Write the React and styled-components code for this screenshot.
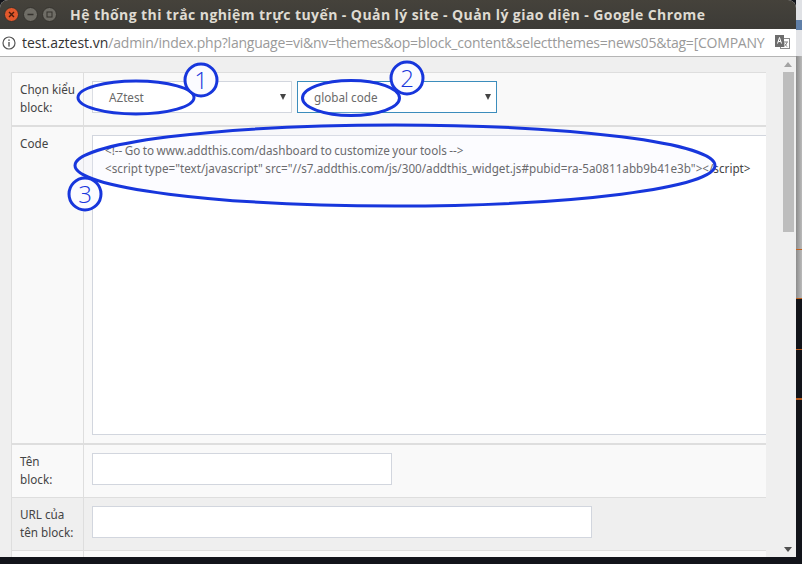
import React from 'react'
import styled, { createGlobalStyle } from 'styled-components'

const Global = createGlobalStyle`
  html, body {
    margin: 0;
    padding: 0;
    width: 802px;
    height: 564px;
    overflow: hidden;
    background: #12141a;
  }
  * {
    box-sizing: border-box;
  }
`

const Desktop = styled.div`
  position: relative;
  display: flex;
  width: 802px;
  height: 564px;
  background: #12141a;
  overflow: hidden;
`

const Backdrop = styled.div`
  width: 6px;
  height: 564px;
  flex: none;
  display: flex;
  flex-direction: column;
`

const BackdropBand = styled.div`
  height: ${(p) => p.$h}px;
  flex: none;
  background: ${(p) => p.$bg};
`

const Window = styled.div`
  width: 796px;
  height: 557px;
  flex: none;
  display: flex;
  flex-direction: column;
  overflow: hidden;
  border-radius: 8px 8px 0 0;
  background: #efefef;
`

const TitleBar = styled.div`
  height: 29px;
  flex: none;
  display: flex;
  align-items: center;
  padding-left: 4px;
  background: linear-gradient(#45423b, #3c3b37);
`

const WinBtn = styled.span`
  width: 15px;
  height: 15px;
  margin-right: 4px;
  flex: none;
  border-radius: 50%;
  display: flex;
  align-items: center;
  justify-content: center;
  background: ${(p) => p.$bg};
  border: 1px solid #35332e;
`

const Title = styled.div`
  margin-left: 9px;
  font-family: 'Open Sans', sans-serif;
  font-size: 14px;
  font-weight: 700;
  letter-spacing: 0.42px;
  color: #dfdbd2;
  white-space: nowrap;
`

const UrlBar = styled.div`
  height: 28px;
  flex: none;
  display: flex;
  align-items: center;
  padding: 0 6px 0 2px;
  background: #fff;
  border-bottom: 1px solid #b5b5b5;
`

const Url = styled.div`
  flex: 1;
  margin: 0 8px 0 6px;
  width: 0;
  overflow: hidden;
  white-space: nowrap;
  font-family: 'Open Sans', sans-serif;
  font-size: 14px;
  letter-spacing: -0.22px;
  color: #9a9a9a;
`

const Host = styled.span`
  color: #333;
  letter-spacing: 0;
`

const Body = styled.div`
  flex: 1;
  min-height: 0;
  display: flex;
  overflow: hidden;
`

const Content = styled.div`
  flex: 1;
  min-width: 0;
  padding: 15px 0 0 11px;
`

const Table = styled.div`
  width: 755px;
  border-top: 1px solid #dedede;
  font-family: 'Noto Sans', sans-serif;
  font-size: 11.7px;
  line-height: 18px;
  color: #444;
`

const Row = styled.div`
  display: flex;
  height: ${(p) => p.$h}px;
  background: ${(p) => (p.$alt ? '#efefef' : '#f9f9f9')};
  border-bottom: ${(p) => p.$line || 1}px solid #dedede;
`

const Label = styled.div`
  width: 73px;
  flex: none;
  padding: 7px 0 0 8px;
  border-left: 1px solid #dedede;
  border-right: 1px solid #dedede;
`

const Field = styled.div`
  flex: 1;
  min-width: 0;
  display: flex;
  gap: 5px;
  padding: 8px 0 0 8px;
`

const Select = styled.div`
  width: 200px;
  height: 32px;
  display: flex;
  align-items: center;
  justify-content: space-between;
  padding: 0 5px 0 16px;
  background: #fff;
  border: 1px solid ${(p) => (p.$focus ? '#3c8dbc' : '#d2d6de')};
`

const Arrow = styled.span`
  width: 0;
  height: 0;
  border-left: 3px solid transparent;
  border-right: 3px solid transparent;
  border-top: 6px solid #444;
`

const CodeBox = styled.div`
  width: 100%;
  height: 300px;
  padding: 5px 12px;
  white-space: nowrap;
  word-spacing: -0.6px;
  background: #fff;
  border: 1px solid #d2d6de;
  border-right: none;
`

const Input = styled.div`
  width: ${(p) => p.$w}px;
  height: 32px;
  background: #fff;
  border: 1px solid #d2d6de;
`

const Scrollbar = styled.div`
  width: 30px;
  flex: none;
  display: flex;
  flex-direction: column;
  align-items: flex-end;
  padding: 5px 2px 0 0;
`

const ScrollUp = styled.span`
  margin-right: 2px;
  width: 0;
  height: 0;
  border-left: 4px solid transparent;
  border-right: 4px solid transparent;
  border-bottom: 5px solid #a3a3a3;
`

const Thumb = styled.div`
  width: 11px;
  height: 160px;
  margin-top: 5px;
  background: #bdbdbd;
`

const ScrollDown = styled.span`
  margin: auto 2px 5px 0;
  width: 0;
  height: 0;
  border-left: 4px solid transparent;
  border-right: 4px solid transparent;
  border-top: 5px solid #505050;
`

const Marks = styled.svg`
  position: absolute;
  left: 0;
  top: 0;
  pointer-events: none;
`

const MarkNumber = styled.text`
  font-family: 'Open Sans', sans-serif;
  font-size: 24px;
  font-weight: 300;
  fill: #1736dc;
  text-anchor: middle;
`

const TranslateIcon = () => (
  <svg width="15" height="15" viewBox="0 0 15 15">
    <rect x="5.5" y="3.5" width="9" height="10" fill="#fff" stroke="#8a8a8a" />
    <rect x="0" y="0" width="9" height="12" fill="#6d6d6d" />
    <path d="M2.5 8.5l2-6 2 6M3.2 6.5h2.6" stroke="#fff" fill="none" />
    <path d="M9 7h4M8.5 11.5c2-1 3-2 3.2-4M9.5 8.5c.5 1 1.2 2 2.8 3" stroke="#777" fill="none" />
  </svg>
)

const InfoIcon = () => (
  <svg width="14" height="14" viewBox="0 0 14 14">
    <circle cx="7" cy="7" r="6" fill="none" stroke="#555" strokeWidth="1.2" />
    <rect x="6.3" y="6" width="1.4" height="4.6" fill="#555" />
    <rect x="6.3" y="3.4" width="1.4" height="1.5" fill="#555" />
  </svg>
)

export default function App() {
  return (
    <>
      <Global />
      <Desktop>
        <Window>
          <TitleBar>
            <WinBtn $bg="#e2582c">
              <svg width="7" height="7" viewBox="0 0 7 7">
                <path d="M1 1l5 5M6 1L1 6" stroke="#4a1c0c" strokeWidth="1.4" />
              </svg>
            </WinBtn>
            <WinBtn $bg="#6f6d66">
              <svg width="7" height="7" viewBox="0 0 7 7">
                <path d="M0.5 3.5h6" stroke="#34322d" strokeWidth="1.4" />
              </svg>
            </WinBtn>
            <WinBtn $bg="#6f6d66">
              <svg width="7" height="7" viewBox="0 0 7 7">
                <rect x="1" y="1" width="5" height="5" fill="none" stroke="#34322d" />
              </svg>
            </WinBtn>
            <Title>Hệ thống thi trắc nghiệm trực tuyến - Quản lý site - Quản lý giao diện - Google Chrome</Title>
          </TitleBar>
          <UrlBar>
            <InfoIcon />
            <Url>
              <Host>test.aztest.vn</Host>/admin/index.php?language=vi&amp;nv=themes&amp;op=block_content&amp;selectthemes=news05&amp;tag=[COMPANY
            </Url>
            <TranslateIcon />
          </UrlBar>
          <Body>
            <Content>
              <Table>
                <Row $h={54} $line={2}>
                  <Label>Chọn kiểu block:</Label>
                  <Field>
                    <Select>
                      AZtest
                      <Arrow />
                    </Select>
                    <Select $focus>
                      global code
                      <Arrow />
                    </Select>
                  </Field>
                </Row>
                <Row $h={318} $line={2}>
                  <Label>Code</Label>
                  <Field>
                    <CodeBox>
                      &lt;!-- Go to www.addthis.com/dashboard to customize your tools --&gt;
                      <br />
                      &lt;script type="text/javascript" src="//s7.addthis.com/js/300/addthis_widget.js#pubid=ra-5a0811abb9b41e3b"&gt;&lt;/script&gt;
                    </CodeBox>
                  </Field>
                </Row>
                <Row $h={53}>
                  <Label>
                    Tên
                    <br />
                    block:
                  </Label>
                  <Field>
                    <Input $w={300} />
                  </Field>
                </Row>
                <Row $h={53} $alt>
                  <Label>URL của tên block:</Label>
                  <Field>
                    <Input $w={500} />
                  </Field>
                </Row>
                <Row $h={53}>
                  <Label />
                </Row>
              </Table>
            </Content>
            <Scrollbar>
              <ScrollUp />
              <Thumb />
              <ScrollDown />
            </Scrollbar>
          </Body>
        </Window>
        <Backdrop>
          <BackdropBand $h={20} $bg="#dfe1e5" />
          <BackdropBand $h={10} $bg="#5f7fa8" />
          <BackdropBand $h={26} $bg="#e4e5e8" />
          <BackdropBand $h={193} $bg="linear-gradient(90deg, #8c8c8c, #bababa)" />
          <BackdropBand $h={1} $bg="#c0601c" />
          <BackdropBand $h={48} $bg="linear-gradient(90deg, #8c8c8c, #bababa)" />
          <BackdropBand $h={1} $bg="#c0601c" />
          <BackdropBand $h={50} $bg="#12141a" />
          <BackdropBand $h={1} $bg="#b5591c" />
          <BackdropBand $h={48} $bg="#12141a" />
          <BackdropBand $h={2} $bg="#b5591c" />
        </Backdrop>
        <Marks width="802" height="564" viewBox="0 0 802 564" fill="none" stroke="#1736dc" strokeWidth="3">
          <ellipse cx="136" cy="97.5" rx="58" ry="16.5" fill="rgba(255,255,255,0.2)" />
          <ellipse cx="351" cy="98" rx="48.5" ry="17.5" fill="rgba(255,255,255,0.2)" />
          <ellipse cx="395" cy="165.5" rx="320" ry="40.5" fill="rgba(240,240,255,0.22)" />
          <circle cx="201" cy="80" r="16" fill="#fbfbff" />
          <circle cx="407" cy="78" r="16" fill="#fbfbff" />
          <circle cx="85" cy="194" r="16" fill="#fbfbff" />
          <MarkNumber x="201" y="89" stroke="none">1</MarkNumber>
          <MarkNumber x="407" y="87" stroke="none">2</MarkNumber>
          <MarkNumber x="85" y="203" stroke="none">3</MarkNumber>
        </Marks>
      </Desktop>
    </>
  )
}
